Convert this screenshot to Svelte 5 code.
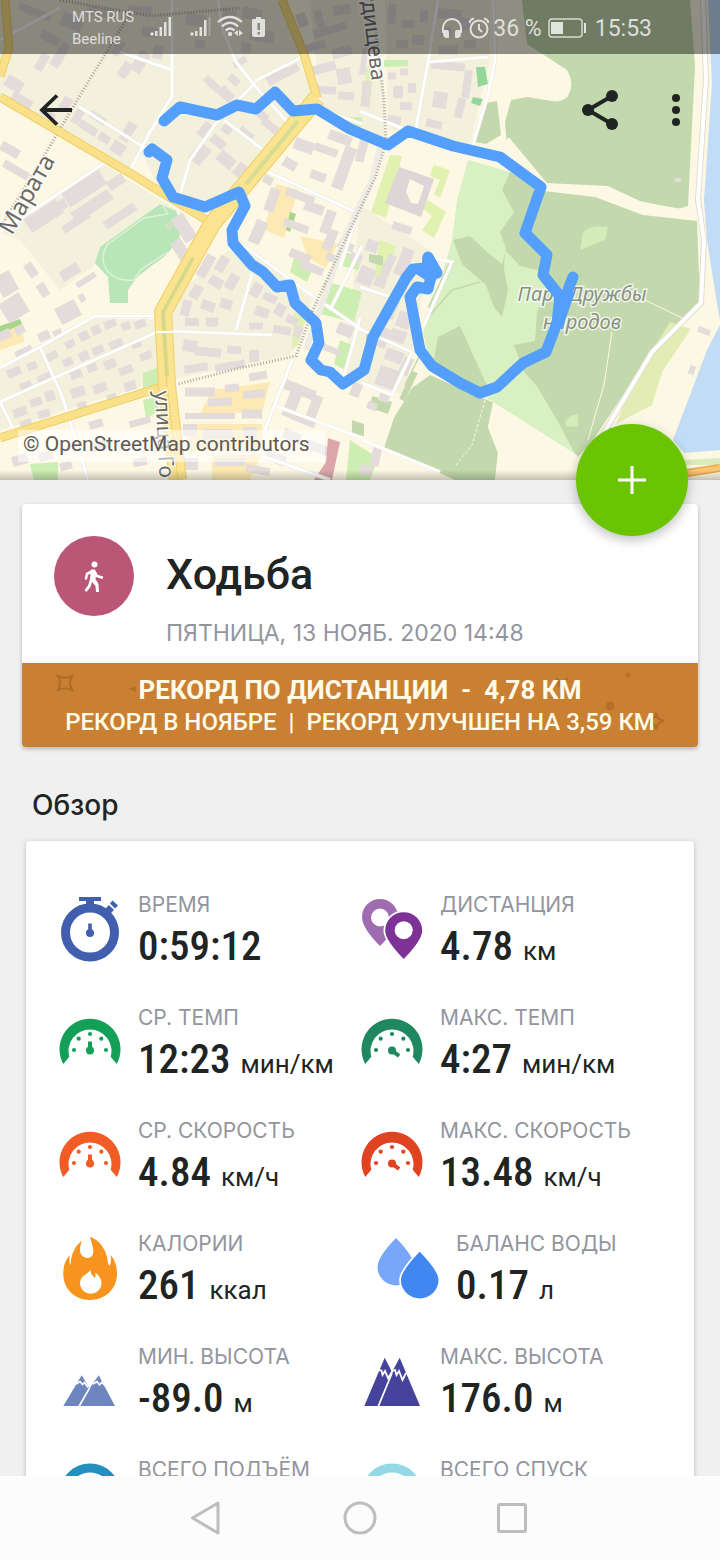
<script>
  // Building footprints: centre x, centre y, width, height, rotation
  const buildings = [
    [35, 12, 34, 8, 20], [72, 22, 22, 14, 25], [50, 38, 20, 9, 30], [100, 12, 26, 9, 10], [140, 10, 24, 8, 5],
    [150, 32, 16, 10, 10], [60, 55, 26, 10, -60], [42, 62, 18, 9, -60], [118, 48, 16, 9, -58], [140, 62, 22, 12, -58],
    [158, 52, 10, 14, 10], [125, 70, 10, 16, 35], [196, 20, 20, 12, 10], [200, 44, 10, 8, 10], [228, 20, 14, 22, 12],
    [252, 14, 20, 12, 12], [262, 36, 24, 12, 10], [246, 48, 10, 10, 10], [212, 84, 18, 8, 45], [226, 94, 10, 16, -45],
    [234, 80, 8, 12, -45], [278, 76, 24, 10, -28], [292, 70, 14, 8, -28], [240, 62, 14, 7, -30], [14, 84, 12, 18, -60],
    [22, 100, 22, 8, 30], [48, 114, 16, 7, 30], [66, 104, 10, 14, 30], [88, 128, 20, 8, 32], [104, 138, 12, 8, 32],
    [118, 148, 14, 12, 32], [128, 132, 10, 20, 32], [78, 116, 8, 16, 32], [98, 118, 18, 7, 32], [205, 130, 10, 16, 40],
    [218, 142, 16, 9, 40], [200, 154, 14, 20, 40], [226, 160, 18, 12, 40], [240, 170, 10, 14, 40], [258, 112, 24, 8, 40],
    [270, 126, 18, 8, 40], [246, 134, 16, 8, 40], [228, 128, 10, 12, 40], [10, 150, 20, 10, 30], [16, 170, 28, 8, 30],
    [44, 216, 38, 16, -33], [60, 206, 14, 10, -33], [84, 188, 44, 18, -33], [92, 206, 44, 12, -33], [116, 182, 18, 10, -33],
    [120, 216, 36, 9, -33], [76, 222, 30, 8, -33], [184, 228, 14, 28, -33], [182, 252, 12, 26, -33], [6, 284, 18, 22, -30],
    [14, 308, 24, 22, -32], [31, 270, 9, 15, -35], [43, 290, 9, 14, -32], [70, 272, 20, 11, -32], [86, 280, 22, 6, -32],
    [68, 312, 22, 18, -28], [82, 298, 6, 8, -28], [4, 335, 14, 9, -25], [20, 330, 10, 8, -25], [24, 352, 18, 8, -25],
    [44, 336, 12, 9, -25], [58, 334, 9, 9, -25], [70, 344, 10, 8, -25], [84, 336, 10, 9, -25], [96, 330, 9, 9, -25],
    [110, 324, 12, 8, -20], [126, 326, 9, 8, -20], [140, 324, 12, 8, -20], [52, 356, 12, 8, -25], [68, 362, 10, 8, -25],
    [84, 356, 10, 9, -25], [98, 350, 12, 8, -25], [116, 344, 14, 8, -25], [136, 344, 10, 8, -20], [146, 356, 12, 8, -20],
    [14, 372, 14, 9, -22], [32, 366, 10, 8, -22], [26, 386, 12, 8, -22], [44, 378, 14, 8, -22], [76, 374, 12, 9, -22],
    [92, 368, 10, 8, -22], [110, 364, 12, 9, -22], [126, 370, 14, 8, -22], [20, 412, 14, 9, -18], [36, 402, 12, 8, -18],
    [50, 396, 10, 10, -18], [26, 424, 12, 8, -18], [44, 414, 12, 8, -18], [78, 392, 14, 10, -18], [82, 406, 9, 8, -18],
    [100, 388, 14, 9, -18], [112, 398, 10, 8, -18], [130, 386, 12, 9, -18], [140, 422, 22, 7, -15], [96, 424, 14, 8, -15],
    [20, 460, 16, 10, -15], [46, 456, 14, 9, -15], [66, 466, 12, 8, -15], [100, 446, 18, 8, -15], [140, 462, 14, 8, -10],
    [206, 266, 10, 24, 30], [222, 264, 10, 16, 30], [216, 282, 14, 10, 30], [232, 282, 10, 16, 30], [196, 292, 10, 14, 30],
    [208, 306, 14, 10, 20], [226, 304, 12, 10, 15], [186, 308, 9, 16, 15], [192, 322, 14, 8, 0], [212, 322, 12, 9, 0],
    [256, 290, 10, 14, 30], [270, 298, 14, 8, 25], [262, 312, 14, 10, 20], [280, 310, 10, 12, 30], [292, 320, 12, 8, 25],
    [256, 326, 14, 7, 0], [282, 330, 18, 8, 10], [298, 332, 8, 12, 20], [190, 346, 14, 12, 10], [208, 352, 26, 9, 5],
    [234, 350, 14, 8, 5], [196, 368, 24, 8, -8], [230, 366, 30, 8, -10], [254, 356, 10, 12, 0], [200, 392, 30, 9, 0],
    [232, 388, 14, 8, -5], [258, 376, 18, 8, -10], [220, 402, 24, 8, -4], [254, 394, 22, 8, -6], [210, 416, 50, 6, 0],
    [252, 414, 20, 9, 0], [190, 430, 14, 12, 0], [218, 434, 30, 10, 0], [250, 432, 14, 10, 0], [300, 390, 32, 10, 22],
    [292, 404, 12, 28, 22], [314, 408, 10, 26, 22], [304, 420, 24, 8, 22], [292, 436, 18, 10, 22], [318, 448, 24, 9, 22],
    [276, 458, 20, 10, 22], [230, 462, 30, 8, 0], [190, 464, 16, 12, 0], [258, 470, 24, 8, 10], [272, 200, 10, 24, 20],
    [300, 196, 30, 8, 20], [314, 208, 20, 10, 20], [296, 226, 26, 8, 20], [258, 232, 12, 24, 24], [328, 222, 10, 24, 20],
    [344, 168, 12, 44, 20], [326, 150, 24, 8, 20], [304, 146, 20, 12, 20], [340, 138, 24, 10, 20], [290, 164, 14, 10, 30],
    [318, 176, 16, 9, 20], [268, 180, 10, 8, 30], [330, 30, 34, 8, -15], [316, 46, 20, 8, -15], [342, 52, 20, 10, -15],
    [324, 68, 24, 9, -15], [344, 76, 14, 16, -10], [320, 22, 8, 24, -15], [342, 10, 18, 10, -10], [302, 20, 10, 14, -20],
    [326, 90, 20, 8, 5], [346, 96, 16, 8, 5], [392, 14, 8, 20, 8], [408, 24, 14, 8, 5], [424, 16, 8, 14, 5],
    [402, 44, 12, 9, 5], [418, 40, 12, 10, 5], [450, 14, 24, 10, 5], [446, 32, 10, 10, 5], [466, 24, 12, 12, 8],
    [448, 50, 20, 9, 0], [470, 44, 12, 8, 0], [364, 60, 6, 30, 8], [366, 94, 9, 26, 5], [392, 76, 8, 7, 0],
    [404, 72, 8, 7, 0], [398, 92, 10, 12, 0], [412, 88, 8, 10, 0], [406, 106, 12, 8, 0], [440, 100, 14, 16, 8],
    [448, 66, 34, 8, 5], [467, 84, 8, 28, 8], [460, 108, 8, 20, 14], [434, 124, 16, 8, 14], [394, 120, 14, 8, 10],
    [362, 150, 9, 24, 15], [402, 228, 20, 8, 18], [372, 246, 12, 12, 18], [366, 276, 16, 18, 22], [388, 266, 9, 24, 24],
    [404, 262, 12, 28, 22], [380, 282, 12, 10, 20], [356, 258, 12, 9, 22], [346, 246, 16, 8, 22], [330, 240, 10, 22, 22],
    [332, 258, 12, 8, 22], [312, 268, 24, 8, 22], [300, 256, 22, 9, 22], [392, 308, 10, 22, 22], [404, 320, 14, 16, 20],
    [398, 336, 16, 12, 20], [384, 338, 9, 20, 22], [394, 356, 18, 12, 20], [388, 378, 22, 20, 20], [406, 366, 10, 18, 24],
    [384, 398, 10, 8, 20], [372, 406, 10, 8, 20], [345, 330, 16, 12, 22], [332, 350, 18, 6, 22], [356, 390, 10, 14, 22],
    [376, 456, 9, 20, 12], [366, 470, 12, 10, 10], [704, 331, 13, 6, 20], [692, 370, 6, 9, 20], [678, 180, 6, 4, 0]
  ];

  const streets = [
    'M172 0V96L150 132L129 173', 'M218 0L222 28L236 62L255 86L289 124', 'M255 81L300 58', 'M255 83L217 122L190 160L180 195',
    'M78 106L145 148', 'M224 120L262 149', 'M0 232L106 162', 'M268 172L360 214', 'M0 368L40 347L95 316H160',
    'M0 402L155 333', 'M40 347L62 396L88 480', 'M0 402L15 432', 'M168 331L272 335', 'M252 274L236 330',
    'M240 243L310 294L362 330L412 352', 'M360 318L344 376', 'M292 360L264 432', 'M276 406L362 438', 'M262 456L330 480',
    'M438 0L428 62L416 128', 'M428 62L488 57', 'M493 0L495 60L488 95L472 148', 'M360 111L406 130', 'M300 102L362 124',
    'M360 205L340 268', 'M330 310L362 246', 'M360 287L400 300L414 262', 'M362 383L392 395L412 352', 'M362 440L440 472',
    'M430 258L452 262L424 325', 'M120 52L172 70', 'M0 40L60 8'
  ];

  const route =
    'M164 121L180 107L217 115L237 105L256 109L275 92L293 111L317 109L350 129L388 145L408 131L453 146L500 157L541 187L525 233L547 255L543 275L559 295L560 315L546 352L523 363L497 387L480 393L460 383L432 366L420 350L410 297L417 287L428 289L432 273L437 273L428 257L427 268L413 269L406 278L373 337L364 370L343 384L330 372L321 370L311 360L319 343L316 323L295 303L290 285L277 287L263 272L252 265L233 243L232 230L245 206L239 192L205 207L173 197L162 178L167 160L152 149L149 152';

  const stats = [
    { icon: 'watch', color: '#415fae', label: 'ВРЕМЯ', value: '0:59:12', unit: '' },
    { icon: 'pins', color: '#7d3396', label: 'ДИСТАНЦИЯ', value: '4.78', unit: 'км' },
    { icon: 'gauge', color: '#149f57', label: 'СР. ТЕМП', value: '12:23', unit: 'мин/км' },
    { icon: 'gauge', color: '#1f8860', label: 'МАКС. ТЕМП', value: '4:27', unit: 'мин/км', turn: 128 },
    { icon: 'gauge', color: '#f15b24', label: 'СР. СКОРОСТЬ', value: '4.84', unit: 'км/ч' },
    { icon: 'gauge', color: '#e14220', label: 'МАКС. СКОРОСТЬ', value: '13.48', unit: 'км/ч', turn: 128 },
    { icon: 'flame', color: '#f7941e', label: 'КАЛОРИИ', value: '261', unit: 'ккал' },
    { icon: 'drops', color: '#4286f0', label: 'БАЛАНС ВОДЫ', value: '0.17', unit: 'л', inset: true },
    { icon: 'hills', color: '#6f85bf', label: 'МИН. ВЫСОТА', value: '-89.0', unit: 'м' },
    { icon: 'peaks', color: '#45439b', label: 'МАКС. ВЫСОТА', value: '176.0', unit: 'м' },
    { icon: 'ring', color: '#2490c0', label: 'ВСЕГО ПОДЪЁМ', value: '', unit: '' },
    { icon: 'ring', color: '#92d8e5', label: 'ВСЕГО СПУСК', value: '', unit: '' }
  ];
</script>

<div class="screen">
  <main>
    <section class="hero">
      <svg class="map" viewBox="0 0 720 480" preserveAspectRatio="xMidYMid slice" aria-hidden="true">
        <rect width="720" height="480" fill="#fdf8e4" />
        <g fill="#f3f0dc">
          <path d="M0 0H172V96L129 172L0 96Z" />
          <path d="M175 0H280L312 95L215 215L160 190L140 150Z" />
          <path d="M0 232L105 165L200 225L160 203L100 247L95 265L60 290L20 240Z" />
          <path d="M310 0H358L384 90V140L320 105Z" />
          <path d="M385 0H490V60L470 145L388 130Z" />
          <path d="M0 370L95 318L158 320L163 380L0 430Z" />
          <path d="M170 300L240 240L312 300L290 355L170 380Z" />
          <path d="M360 205L430 250L405 395L345 380Z" />
        </g>
        <g fill="#fce9b4">
          <path d="M276 184L298 190L284 238L264 230Z" /><path d="M300 236L338 244L326 268L308 258Z" />
          <path d="M212 390L270 382L262 412L200 414Z" /><path d="M186 424L262 424V448L190 452Z" />
          <path d="M212 456L262 454L250 480H212Z" /><path d="M0 332L22 322L24 342L0 350Z" />
        </g>
        <path fill="#b9e6b8" d="M95 263L100 247L160 204L176 211Q182 226 179 240L165 256L138 276L128 290V303H110L108 277Z" />
        <path fill="none" stroke="#dcf2d4" stroke-width="1.5" d="M163 206L168 214L144 218L108 244Q98 258 108 272Q118 282 134 280L140 270L168 252" />
        <circle cx="169" cy="226" r="4" fill="#cfe0c5" />
        <g fill="#cdeeb2">
          <path d="M294 258L314 266L307 282L290 272Z" /><path d="M325 281L362 292L354 323L318 313Z" />
          <path d="M340 340L352 345L345 370L334 364Z" /><path d="M143 373L157 368L160 385L143 395Z" />
          <path d="M143 400L158 396V412L146 418Z" /><path d="M30 464L58 462V480H34Z" />
          <path d="M350 440L378 458L370 480H346Z" /><path d="M330 118L362 117V127L345 128Z" />
          <path d="M343 252L362 256L358 270L342 266Z" /><path d="M384 60L408 60V66L384 67Z" />
        </g>
        <g fill="#e1f1b0">
          <path d="M366 68L374 70L370 104L364 98Z" /><path d="M390 155L402 156L386 218L371 212Z" />
          <path d="M434 165L450 170L440 198L434 194L440 180L430 176Z" />
          <path d="M428 200L446 212L434 238L422 230L432 216L422 208Z" />
          <path d="M380 240L396 246L384 282L374 278Z" /><path d="M294 312L306 318L298 345L292 350Z" />
        </g>
        <path fill="#93d79d" d="M476 67H485L488 84L478 87Z" /><path fill="#93d79d" d="M473 97L483 99L480 106L471 103Z" />
        <path fill="#a7d58c" d="M0 326L20 319L22 324L0 334Z" />
        <path fill="#a7d58c" d="M290 212L296 214L290 232L286 230Z" />
        <path fill="#d9f1c2" d="M468 160L510 172L545 192L577 458L480 394L432 368L423 333L446 262L452 240L457 200Z" />
        <g fill="#c3d8ac">
          <path d="M522 0L527 44L567 70Q575 84 568 96Q562 103 552 101L527 97L511 100L505 122L507 146L522 157L544 184L607 187L640 201L678 209L688 206L695 67L690 0Z" />
          <path d="M510 172L544 191L595 197L643 215L697 221L700 305L653 350L593 440L577 458L560 425L547 403L536 385L524 372L514 345L535 341L537 312L548 290L538 270L520 266L505 250L504 268L508 290L502 317L494 307L486 285L462 264L453 240L470 236L487 252L502 264L506 248L500 232L514 212L502 190Z" />
          <path d="M438 337L460 326L488 388L478 390L433 364Z" />
          <path d="M430 375L494 403L488 427L498 453L495 480H455L384 448L394 418L412 388Z" />
          <path d="M486 103L497 101L501 135L486 144L474 142Z" />
          <path d="M369 254L383 256V266L369 262Z" /><path d="M372 396L392 402L388 414L370 408Z" />
          <path d="M352 420L364 424V436L352 434Z" /><path d="M366 330L374 336L366 362Z" />
        </g>
        <g fill="#d4ebba">
          <path d="M583 232Q592 224 608 227L605 240L580 250Z" /><path d="M565 422Q570 413 578 415V427L566 426Z" />
        </g>
        <g fill="none" stroke="#c3d8ac" stroke-width="1.5">
          <path d="M452 262L430 308" stroke-width="5" /><path d="M430 315L452 290L480 282" />
          <path d="M415 372L402 400" stroke-width="6" /><path d="M425 345L405 385" />
        </g>
        <path fill="#fdf8e4" d="M493 402L480 394L577 455L582 480H495L498 453L488 427Z" />
        <path fill="#fdf8e4" d="M697 0H709L712 84L704 200L707 240L718 318L707 350L676 435L620 428L600 440L655 352L702 306Z" />
        <path fill="#e3ecb5" d="M670 322L691 329L662 372L652 405L616 424L632 382Z" />
        <path fill="#c1dcf4" d="M708 0L712 84L704 200L707 240L719 316L720 320V0Z" />
        <path fill="#c1dcf4" d="M720 325L707 350L673 440L684 453L720 450Z" />
        <path fill="#dcebbb" d="M684 460L720 458V465H684Z" />
        <g fill="none" stroke="#fdf8e4">
          <path stroke-width="8" d="M506 140L545 187L607 190L643 207L695 215" />
          <path stroke-width="3" d="M432 370L480 394" />
          <path stroke-width="1" d="M612 332L604 385L588 440" /><path stroke-width="1" d="M645 300L682 318" />
          <path stroke-width="1" d="M485 400L472 445L456 465" stroke-dasharray="3 2" />
        </g>
        <g fill="#e3dcda">
          {#each buildings as [cx, cy, w, h, angle]}
            <rect x={cx - w / 2} y={cy - h / 2} width={w} height={h} transform="rotate({angle} {cx} {cy})" />
          {/each}
          <path fill="#ddd5d6" fill-rule="evenodd" d="M399 167L434 179L421 217L385 203ZM410 179L406 192L411 203L418 204L424 186Z" />
        </g>
        <path fill="#dba7ab" d="M328 438L340 442L332 480H314L326 462Z" />
        <g fill="none" stroke="#eae6dc" stroke-width="4">
          {#each streets as d}<path {d} />{/each}
        </g>
        <g fill="none" stroke="#fff" stroke-width="3">
          {#each streets as d}<path {d} />{/each}
        </g>
        <g fill="none">
          <path stroke="#e2ddd2" stroke-width="6" d="M703 0L706 80L698 200L704 240L701 303L652 352L596 446" />
          <path stroke="#fff" stroke-width="4" d="M703 0L706 80L698 200L704 240L701 303L652 352L596 446" />
          <path stroke="#eeece4" stroke-width="6" d="M382 140L372 180L346 234L306 350" />
          <g stroke="#aaa6a0" stroke-width="3" stroke-dasharray="1 2">
            <path d="M60 0L150 16L240 8" /><path d="M130 14L82 92L50 146L0 228" />
            <path d="M372 0L384 100L386 142L376 176L349 232L312 312L296 356L240 368L178 384" />
          </g>
        </g>
        <g fill="none" stroke="#ecd06c" stroke-width="9">
          <path d="M5 0L9 48L0 76" /><path d="M0 97L130 173L216 226" /><path d="M282 0L304 54L317 98" />
          <path d="M0 438L165 386" />
        </g>
        <g fill="none" stroke="#fae088" stroke-width="7">
          <path d="M5 0L9 48L0 76" /><path d="M0 97L130 173L216 226" /><path d="M282 0L304 54L317 98" />
          <path d="M0 438L165 386" />
        </g>
        <g fill="none" stroke-linejoin="round">
          <path stroke="#ecd06c" stroke-width="18" d="M317 98L212 224L163 312L167 386L178 480" />
          <path stroke="#fbe38f" stroke-width="16" d="M317 98L212 224L163 312L167 386L178 480" />
          <path stroke="#d5dd92" stroke-width="4" d="M298 121L246 184M193 258L163 312L167 376" />
          <path stroke="#e6c963" stroke-width="1" stroke-dasharray="2 1" d="M193 258L163 312L167 386L178 480" />
          <path stroke="#fff" stroke-width="2" d="M156 332H176" />
          <path stroke="#eba94c" stroke-width="8" d="M680 474L720 468" /><path stroke="#fcc56f" stroke-width="5" d="M680 474L720 468" />
        </g>
        <g class="place">
          <text transform="translate(12 236) rotate(-60)" font-size="24">Марата</text>
          <text transform="translate(362 2) rotate(83)" font-size="21">дищева</text>
          <text transform="translate(155 391) rotate(87)" font-size="21">улица Го</text>
          <g font-size="20" font-style="italic" text-anchor="middle" fill="#8a9180">
            <text x="582" y="301">Парк Дружбы</text><text x="582" y="329">народов</text>
          </g>
        </g>
        <g fill="none" stroke="#549ffb" stroke-width="11" stroke-linecap="round" stroke-linejoin="round">
          <path d={route} /><path d="M560 310L573 277" /><path d="M428 258L436 272L431 277L420 270" />
        </g>
        <path fill="#549ffb" d="M555 292L575 292L562 330L552 318Z" />
      </svg>

      <header class="status">
        <div class="carriers"><span>MTS RUS</span><span>Beeline</span></div>
        <svg class="signals" width="118" height="30" viewBox="0 0 118 30" aria-hidden="true">
          <g fill="#e0e0dc">
            <circle cx="2" cy="22" r="1.8" /><path d="M5 19h2.5v5H5zM9.5 15h2.5v9h-2.5zM14 10h2.5v14h-2.5zM18.500 5h2.500v19h-2.500z" />
            <circle cx="42" cy="22" r="1.8" /><path d="M45 19h2.5v5h-2.5zM49.500 15h2.500v9h-2.500zM54 8h2.500v16h-2.500z" />
            <path opacity=".3" d="M58.500 5h2v19h-2z" />
            <circle cx="80" cy="22" r="2.200" /><path d="M88 18v6l-4-3zM89 18v6l4-3z" />
            <path d="M106 5h5v2h3q1 0 1 1v15q0 2-2 2h-9q-2 0-2-2V8q0-1 1-1h3z" />
          </g>
          <g fill="none" stroke="#e0e0dc" stroke-width="2.200"><path d="M68 10Q80 0 92 10M72 14.500Q80 7 88 14.500M75.500 18.500Q80 14.500 84.500 18.500" /></g>
          <path fill="#8c8a7e" d="M107.500 11h2.500v7h-2.500zM107.500 20h2.500v2.500h-2.500z" />
        </svg>
        <div class="right">
          <svg width="48" height="26" viewBox="0 0 48 26" aria-hidden="true">
            <g fill="none" stroke="#e0e0dc" stroke-width="2">
              <path d="M2 18V13A8.500 8.500 0 0 1 20 13V18" /><circle cx="38" cy="14" r="8.500" /><path d="M38 9V14L41 17M28.500 8Q29 4.500 33 3.500M43 3.500Q47 4.500 47.500 8" />
            </g>
            <path fill="#e0e0dc" d="M3 15h3q2 0 2 2v5q0 1-1 1H5q-3-1-3-4zM19 15h-3q-2 0-2 2v5q0 1 1 1h2q3-1 3-4z" />
          </svg>
          <span>36 %</span>
          <svg width="42" height="26" viewBox="0 0 42 26" aria-hidden="true">
            <rect x="3" y="4" width="33" height="18" rx="3" fill="none" stroke="#d6dbcf" stroke-width="1.500" />
            <path fill="#e0e4dc" d="M5 7h12v12H5zM38 8h2v10h-2z" />
          </svg>
          <time>15:53</time>
        </div>
      </header>

      <nav class="appbar" aria-label="Тренировка">
        <button aria-label="Назад">
          <svg width="40" height="40" viewBox="0 0 40 40"><path d="M36 20H7M21 5.500L6 20L21 34.500" fill="none" stroke="#202524" stroke-width="3.800" /></svg>
        </button>
        <div class="actions">
          <button aria-label="Поделиться">
            <svg width="40" height="40" viewBox="0 0 40 40"><path d="M32 6L8 20L32 34" fill="none" stroke="#202524" stroke-width="4" /><g fill="#202524"><circle cx="32" cy="6" r="6" /><circle cx="8" cy="20" r="6" /><circle cx="32" cy="34" r="6" /></g></svg>
          </button>
          <button aria-label="Ещё">
            <svg width="40" height="40" viewBox="0 0 40 40" fill="#202524"><circle cx="20" cy="8" r="4" /><circle cx="20" cy="20" r="4" /><circle cx="20" cy="32" r="4" /></svg>
          </button>
        </div>
      </nav>
      <a class="credit" href="#map">© OpenStreetMap contributors</a>
      <button class="fab" aria-label="Добавить">
        <svg width="28" height="28" viewBox="0 0 28 28"><path d="M14 0V28M0 14H28" stroke="#fff" stroke-width="3" /></svg>
      </button>
    </section>

    <article class="workout">
      <div class="summary">
        <span class="sport">
          <svg width="24" height="32" viewBox="0 0 24 32" aria-hidden="true">
            <circle cx="12.500" cy="4.500" r="3" fill="#fff" />
            <path d="M10.500 11L5 14L4 18.500M12.500 12L15 16L20 17.500" fill="none" stroke="#fff" stroke-width="2.600" stroke-linecap="round" stroke-linejoin="round" />
            <path d="M9 9.500H13L14.500 13L13.500 19L16.500 24L17 32H14L13.500 26L10 22L8.500 27L4.500 32L2.500 30L6 25.500L8 19Z" fill="#fff" />
          </svg>
        </span>
        <div>
          <h1>Ходьба</h1>
          <p class="date">ПЯТНИЦА, 13 НОЯБ. 2020 14:48</p>
        </div>
      </div>
      <div class="record">
        <svg viewBox="0 0 676 84" preserveAspectRatio="xMidYMid slice" aria-hidden="true">
          <g fill="none" stroke="#b06c27" stroke-width="2">
            <path d="M35 12L38 14Q43 15 48 14L51 12L49 15Q47 20 49 25L51 28L48 26Q43 25 38 26L35 28L37 25Q39 20 37 15Z" />
            <path d="M634 50Q635 57 642 58Q635 59 634 66Q633 59 626 58Q633 57 634 50Z" />
            <path d="M534 15L538 18Q542 19 546 15M538 18L536 24" />
          </g>
          <g fill="#b5702a"><circle cx="588" cy="43" r="4.500" /><circle cx="606" cy="12" r="2.500" /><path d="M106 26L114 23V29Z" /></g>
        </svg>
        <strong>РЕКОРД ПО ДИСТАНЦИИ&nbsp; -&nbsp; 4,78 КМ</strong>
        <span>РЕКОРД В НОЯБРЕ&nbsp; |&nbsp; РЕКОРД УЛУЧШЕН НА 3,59 КМ</span>
      </div>
    </article>

    <h2>Обзор</h2>

    <dl class="overview">
      {#each stats as s}
        <div class="stat" class:inset={s.inset}>
          <svg width="64" height="84" viewBox="0 0 64 84" fill={s.color} aria-hidden="true">
            {#if s.icon === 'watch'}
              <circle cx="32" cy="42.500" r="24.500" fill="none" stroke={s.color} stroke-width="9" />
              <path d="M21 7H43V11H36V17H28V11H21ZM30.200 33.500H33.800V42H30.200Z" />
              <circle cx="32" cy="43" r="4" />
              <path d="M46 20L51 15L56 20L52 24ZM54.500 10.500L60 15.500L57 18.500L52 13.500Z" />
            {:else if s.icon === 'pins'}
              <path fill="#9f6cb2" fill-rule="evenodd" d="M20 56Q2 38 2 27A18 18 0 0 1 38 27Q38 38 20 56ZM20 18.500A9 9 0 1 0 20 36.500A9 9 0 1 0 20 18.500Z" />
              <path stroke="#fff" stroke-width="3.500" paint-order="stroke" d="M43.700 69Q25.200 50 25.200 40.700A18.500 18.500 0 0 1 62.200 40.700Q62.200 50 43.700 69Z" />
              <circle cx="43.700" cy="40.200" r="9" fill="#fff" />
            {:else if s.icon === 'gauge'}
              <path d="M5.300 61A30.500 30.500 0 1 1 58.700 61L52.700 53.700A21.500 21.500 0 1 0 11.300 53.700Z" />
              <circle cx="16" cy="47" r="2.100" /><circle cx="20.700" cy="35.700" r="2.100" /><circle cx="32" cy="31" r="2.100" /><circle cx="43.300" cy="35.700" r="2.100" /><circle cx="48" cy="47" r="2.100" />
              <circle cx="32" cy="47.500" r="4" />
              <path d="M30 38.500H34V48H30Z" transform="rotate({s.turn ?? 0} 32 47.500)" />
            {:else if s.icon === 'flame'}
              <path d="M32 7.700C41 11 49 20 50 34L51.500 37Q54 32 52.500 26C57 31 59 37 59 45C59 60 47 71 32 71C17 71 5.300 60 5.300 45C5.300 36 8 30 12 26Q10.500 32 12.500 36C13 25 17 17 24 11.500C22 17 21 22 23.500 26Q27 30.500 32 28.500Q36.500 26 35 19Q34 15 32 7.700Z" />
              <path fill="#fff" d="M32.500 40.500Q32 45 37 49Q38 46 37 43.500Q43.500 48 43.500 54A10.700 10.700 0 0 1 22 54Q22 48.500 27.500 45.500Q31 43.500 32.500 40.500Z" />
            {:else if s.icon === 'drops'}
              <path fill="#78a7fa" d="M20 9Q38.500 28 38.500 38A18.500 18.500 0 0 1 1.500 38Q1.500 28 20 9Z" />
              <path stroke="#fff" stroke-width="3.500" paint-order="stroke" d="M43.700 22.700Q62.500 42 62.500 51A18.800 18.500 0 0 1 24.900 51Q24.900 42 43.700 22.700Z" />
            {:else if s.icon === 'hills'}
              <path d="M5.300 64L23.700 33.300L31.500 46.500L40.700 33.300L57 64Z" />
              <path fill="none" stroke="#fff" stroke-width="1.600" d="M18 42L22 39.500L24.500 42.500L26.500 40.500L30 45.500M35 42L39 39.500L41.500 43L43.500 40.500L47.500 44M31.500 46L21 64.500" />
            {:else if s.icon === 'peaks'}
              <path d="M4.300 64L24.700 15.700L32 30L39.700 15.700L60 64Z" />
              <path fill="none" stroke="#fff" stroke-width="1.800" d="M18 28L21.500 28.500L22.500 33L25 29L28 36L32.500 29L35 28L36.500 33L39 29L42.500 38L46 31M32 31L18 65" />
            {:else}
              <circle cx="32" cy="39" r="26" fill="none" stroke={s.color} stroke-width="9" />
            {/if}
          </svg>
          <div>
            <dt>{s.label}</dt>
            {#if s.value}<dd>{s.value}{#if s.unit}<small>{s.unit}</small>{/if}</dd>{/if}
          </div>
        </div>
      {/each}
    </dl>
  </main>

  <nav class="system" aria-label="Система">
    <button aria-label="Назад"><svg width="36" height="36" viewBox="0 0 36 36"><path d="M28 3V33L2.500 18Z" /></svg></button>
    <button aria-label="Домой"><svg width="36" height="36" viewBox="0 0 36 36"><circle cx="18" cy="18" r="15" /></svg></button>
    <button aria-label="Недавние"><svg width="36" height="36" viewBox="0 0 36 36"><rect x="4.500" y="4.500" width="27" height="27" rx="1" /></svg></button>
  </nav>
</div>

<style>
  :global(body) { margin: 0; background: #f0f0f0; }
  .screen { display: flex; flex-direction: column; height: 100vh; overflow: hidden; font-family: Roboto, "Liberation Sans", sans-serif; color: #202524; }
  main { flex: 1; min-height: 0; overflow-y: auto; scrollbar-width: none; }
  button { padding: 0; border: 0; background: none; display: grid; place-items: center; cursor: pointer; }
  svg { display: block; }
  h1, h2, p, dl, dd { margin: 0; }

  .hero { position: relative; height: 480px; background: #fdf8e4; }
  .hero::after { content: ''; position: absolute; inset: auto 0 0; height: 10px; background: linear-gradient(transparent, rgba(0, 0, 0, .22)); }
  .map { position: absolute; inset: 0; width: 100%; height: 100%; }
  .place { font-family: "Noto Sans", "Open Sans", sans-serif; fill: #6c6a68; stroke: rgba(255, 255, 255, .75); stroke-width: 3px; paint-order: stroke; }
  .status { position: relative; display: flex; align-items: center; height: 54px; padding: 0 68px 0 72px; background: rgba(0, 0, 0, .43); color: #dededa; }
  .carriers { display: flex; flex-direction: column; font-size: 15px; line-height: 22px; width: 78px; padding-top: 2px; }
  .right { display: flex; align-items: center; gap: 4px; margin-left: auto; padding-top: 2px; font-size: 23px; }
  .right time { margin-left: 3px; }
  .appbar { position: relative; display: flex; justify-content: space-between; padding: 36px 24px 0 36px; }
  .actions { display: flex; gap: 36px; }
  .credit { position: absolute; left: 18px; bottom: 18px; padding: 0 16px 4px 5px; font-size: 21px; line-height: 28px; color: #5c5b57; text-decoration: none; background: rgba(255, 255, 255, .55); }
  .fab { position: absolute; z-index: 2; right: 32px; bottom: -56px; width: 112px; height: 112px; border-radius: 50%; background: #6bc402; box-shadow: 0 4px 12px rgba(0, 0, 0, .25); }

  .workout { margin: 24px 22px 0; background: #fff; border-radius: 4px; overflow: hidden; box-shadow: 0 2px 4px rgba(0, 0, 0, .25); }
  .summary { display: flex; gap: 32px; padding: 32px 32px 14px; }
  .sport { flex: none; display: grid; place-items: center; width: 80px; height: 80px; border-radius: 50%; background: #ba5676; }
  h1 { font-size: 43px; line-height: 76px; font-weight: 500; }
  .date { padding-top: 5px; font-family: Inter, Roboto, sans-serif; font-size: 23px; line-height: 32px; color: #93959d; }
  .record { position: relative; display: flex; flex-direction: column; align-items: center; padding: 11px 16px 9px; background: #c98032; color: #fffbe8; line-height: 32px; white-space: nowrap; }
  .record svg { position: absolute; inset: 0; width: 100%; height: 100%; }
  .record strong { position: relative; font-size: 26px; font-weight: 700; }
  .record span { position: relative; font-size: 24px; font-weight: 500; }

  h2 { padding: 41px 32px 19px; font-family: Inter, Roboto, sans-serif; font-size: 28px; line-height: 34px; font-weight: 500; }
  .overview { display: grid; grid-template-columns: 1fr 1fr; grid-auto-rows: 84px; row-gap: 29px; margin: 0 26px; padding: 49px 32px; background: #fff; border-radius: 4px; box-shadow: 0 1px 4px rgba(0, 0, 0, .25); }
  .stat { display: flex; gap: 16px; min-width: 0; white-space: nowrap; }
  .stat svg { flex: none; }
  .inset { padding-left: 16px; }
  dt { font-family: Inter, Roboto, sans-serif; font-size: 21px; line-height: 30px; color: #93959d; }
  dd { font-family: "Roboto Condensed", "Liberation Sans Narrow", Roboto, sans-serif; font-size: 41px; line-height: 52px; font-weight: 500; }
  small { margin-left: 10px; font-family: Roboto, sans-serif; font-size: 26px; line-height: 1; font-weight: 400; }

  .system { display: flex; justify-content: center; align-items: center; gap: 92px; height: 84px; background: #fcfcfc; }
  .system button { width: 60px; height: 60px; }
  .system svg { fill: none; stroke: #bdbdbd; stroke-width: 3; stroke-linejoin: round; }
</style>
